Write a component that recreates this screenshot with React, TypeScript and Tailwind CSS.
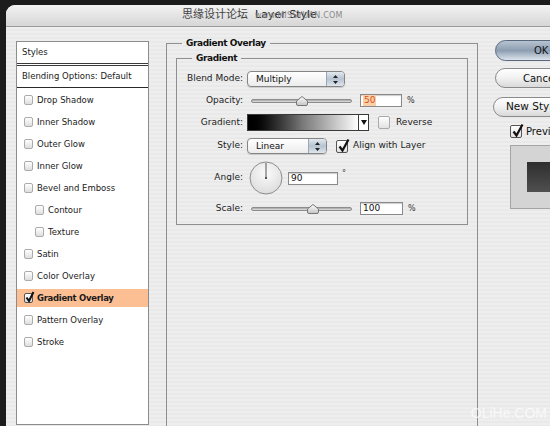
import React from "react";

const items = [
  { label: "Drop Shadow" },
  { label: "Inner Shadow" },
  { label: "Outer Glow" },
  { label: "Inner Glow" },
  { label: "Bevel and Emboss" },
  { label: "Contour", sub: true },
  { label: "Texture", sub: true },
  { label: "Satin" },
  { label: "Color Overlay" },
  { label: "Gradient Overlay", active: true },
  { label: "Pattern Overlay" },
  { label: "Stroke" },
];

function ListCheck({ checked }: { checked?: boolean }) {
  return (
    <span
      className={`relative flex h-[10px] w-[9px] shrink-0 rounded-[2px] border bg-gradient-to-b from-white to-[#dedede] ${
        checked ? "border-[#555]" : "border-[#ababab]"
      }`}
    >
      {checked && (
        <svg className="absolute -top-[3px] left-0" width="10" height="12" viewBox="0 0 10 12">
          <path d="M1.5 6.5 L4 10 L8.5 1" fill="none" stroke="#111" strokeWidth="2" />
        </svg>
      )}
    </span>
  );
}

function BigCheck({ checked }: { checked?: boolean }) {
  return (
    <span
      className={`relative flex h-[13px] w-[12px] shrink-0 rounded-[2px] border bg-gradient-to-b from-white to-[#e2e2e2] ${
        checked ? "border-[#555]" : "border-[#aaa]"
      }`}
    >
      {checked && (
        <svg className="absolute -top-[3px] left-[1px]" width="13" height="15" viewBox="0 0 13 15">
          <path d="M1.5 8.5 L4.5 12.5 L10.5 1.5" fill="none" stroke="#111" strokeWidth="2.2" />
        </svg>
      )}
    </span>
  );
}

function Select({ value, width }: { value: string; width: string }) {
  return (
    <div
      className={`flex h-[16px] ${width} shrink-0 overflow-hidden rounded-[4px] border border-[#858585] bg-gradient-to-b from-white to-[#ececec] shadow-[0_1px_1px_rgba(0,0,0,0.15)]`}
    >
      <span className="flex-1 pl-[8px] text-[9px] leading-[14px] text-[#111]">{value}</span>
      <span className="flex w-[18px] items-center justify-center border-l border-[#9aa6b3] bg-gradient-to-b from-[#e3e9ef] via-[#b6c3d1] to-[#dfe6ed]">
        <svg width="5" height="9" viewBox="0 0 5 9">
          <path d="M2.5 0 L5 3 L0 3Z M2.5 9 L5 6 L0 6Z" fill="#222" />
        </svg>
      </span>
    </div>
  );
}

function Slider({ pos }: { pos: number }) {
  return (
    <div className="relative h-[13px] w-[101px] shrink-0">
      <div className="absolute left-0 right-0 top-[5px] h-[4px] rounded-full border border-[#8d8d8d] bg-gradient-to-b from-[#a5a5a5] to-[#e2e2e2]" />
      <svg className="absolute top-[2px]" style={{ left: pos - 6 }} width="12" height="10" viewBox="0 0 12 10">
        <defs>
          <linearGradient id="th" x1="0" y1="0" x2="0" y2="1">
            <stop offset="0" stopColor="#ffffff" />
            <stop offset="1" stopColor="#c4c4c4" />
          </linearGradient>
        </defs>
        <path d="M6 0.5 L11.5 5 L11.5 8 Q11.5 9.5 10 9.5 L2 9.5 Q0.5 9.5 0.5 8 L0.5 5 Z" fill="url(#th)" stroke="#777" />
      </svg>
    </div>
  );
}

function Field({ children, width }: { children: React.ReactNode; width: string }) {
  return (
    <div
      className={`flex h-[13px] ${width} shrink-0 items-center border border-[#8a8a8a] bg-white pl-[2px] text-[9px] leading-[11px] text-[#111] shadow-[inset_0_1px_1px_rgba(0,0,0,0.2)]`}
    >
      {children}
    </div>
  );
}

function Row({ label, className, children }: { label: string; className?: string; children: React.ReactNode }) {
  return (
    <div className={`flex items-center ${className ?? ""}`}>
      <span className="w-[57px] shrink-0 text-right text-[9px] text-[#222]">{label}</span>
      <div className="ml-[4px] flex items-center">{children}</div>
    </div>
  );
}

export default function App() {
  return (
    <div className="relative h-[426px] w-[550px] overflow-hidden bg-[#1c1c1c] pl-[6px] pt-[5px] font-['DejaVu_Sans','Noto_Sans_CJK_SC',sans-serif]">
      <div className="flex h-[430px] w-[560px] flex-col overflow-hidden rounded-tl-[9px] bg-[#ececec]">
        {/* title bar */}
        <div className="flex h-[22px] shrink-0 items-center border-b border-[#9c9c9c] bg-gradient-to-b from-[#f3f3f3] to-[#d6d6d6] pl-[176px]">
          <span className="text-[11px] text-[#444]">思缘设计论坛</span>
          <span className="relative ml-[7px] text-[11px] text-[#1a1a1a]">
            Layer Style
            <span className="absolute left-0 top-[3px] whitespace-nowrap text-[8px] tracking-[0.2px] text-[#8a8a8a]">
              www.MISSYUAN.COM
            </span>
          </span>
        </div>

        {/* body */}
        <div className="flex flex-1 items-start bg-[repeating-linear-gradient(180deg,#eeeeee_0px,#eeeeee_2px,#e9e9e9_2px,#e9e9e9_4px)] pl-[10px] pt-[10px]">
          {/* style list */}
          <div className="mt-[4px] h-[384px] w-[133px] shrink-0 border border-[#8c8c8c] bg-white text-[8.5px] text-[#1a1a1a]">
            <div className="flex h-[21px] items-center pl-[5px]">Styles</div>
            <div className="h-[3px] border-y border-[#3a3a3a]" />
            <div className="flex h-[22px] items-center border-b border-[#2a2a2a] pl-[5px]">Blending Options: Default</div>
            {items.map((it) => (
              <div key={it.label} className="h-[22px] pb-[1px] pt-[3px]">
                <div
                  className={`flex h-[18px] items-center gap-[4px] ${it.sub ? "pl-[18px]" : "pl-[7px]"} ${
                    it.active ? "bg-[#fcbf94] font-bold" : ""
                  }`}
                >
                  <ListCheck checked={it.active} />
                  <span className={it.active ? "tracking-[-0.3px]" : ""}>{it.label}</span>
                </div>
              </div>
            ))}
          </div>

          {/* gradient overlay panel */}
          <fieldset className="ml-[17px] h-[420px] w-[312px] shrink-0 border border-[#8f8f8f] px-[9px] pt-[3px]">
            <legend className="ml-[6px] px-[4px] text-[9px] font-bold leading-[12px] tracking-[-0.4px] text-[#111]">
              Gradient Overlay
            </legend>
            <fieldset className="w-[292px] border border-[#8f8f8f] px-[9px] pb-[9px] pt-[7px]">
              <legend className="ml-[6px] px-[4px] text-[9px] font-bold leading-[12px] tracking-[-0.4px] text-[#111]">
                Gradient
              </legend>

              <Row label="Blend Mode:" className="h-[16px]">
                <Select value="Multiply" width="w-[98px]" />
              </Row>

              <Row label="Opacity:" className="mt-[7px] h-[13px]">
                <span className="ml-[4px]">
                  <Slider pos={51} />
                </span>
                <span className="ml-[8px]">
                  <Field width="w-[42px]">
                    <span className="bg-[#fbd0a8] px-[1px] text-[#d4521a]">50</span>
                  </Field>
                </span>
                <span className="ml-[5px] text-[8px] text-[#333]">%</span>
              </Row>

              <Row label="Gradient:" className="mt-[7px] h-[17px]">
                <div className="h-[17px] w-[112px] border border-[#3a3a3a] bg-gradient-to-r from-black via-[#7a7a7a] to-white" />
                <div className="flex h-[17px] w-[10px] items-center justify-center border border-l-0 border-[#3a3a3a] bg-white">
                  <svg width="6" height="5" viewBox="0 0 6 5">
                    <path d="M0 0 L6 0 L3 5Z" fill="#111" />
                  </svg>
                </div>
                <span className="ml-[9px]">
                  <BigCheck />
                </span>
                <span className="ml-[6px] text-[9px] text-[#222]">Reverse</span>
              </Row>

              <Row label="Style:" className="mt-[7px] h-[16px]">
                <Select value="Linear" width="w-[80px]" />
                <span className="ml-[9px]">
                  <BigCheck checked />
                </span>
                <span className="ml-[5px] text-[9px] text-[#222]">Align with Layer</span>
              </Row>

              <Row label="Angle:" className="mt-[7px] h-[34px]">
                <svg className="ml-[2px]" width="34" height="34" viewBox="0 0 34 34">
                  <defs>
                    <radialGradient id="dial" cx="0.5" cy="0.35" r="0.65">
                      <stop offset="0" stopColor="#fbfbfb" />
                      <stop offset="1" stopColor="#dcdcdc" />
                    </radialGradient>
                  </defs>
                  <circle cx="17" cy="17" r="16" fill="url(#dial)" stroke="#8d8d8d" />
                  <line x1="17" y1="17" x2="17" y2="2" stroke="#555" strokeWidth="1" />
                  <rect x="16" y="16" width="2" height="2" fill="#555" />
                </svg>
                <span className="ml-[5px]">
                  <Field width="w-[50px]">90</Field>
                </span>
                <span className="ml-[4px] -mt-[8px] text-[8px] text-[#333]">°</span>
              </Row>

              <Row label="Scale:" className="mt-[7px] h-[13px]">
                <span className="ml-[4px]">
                  <Slider pos={62} />
                </span>
                <span className="ml-[8px]">
                  <Field width="w-[43px]">100</Field>
                </span>
                <span className="ml-[5px] text-[8px] text-[#333]">%</span>
              </Row>
            </fieldset>
          </fieldset>

          {/* buttons */}
          <div className="ml-[15px] mt-[3px] flex w-[90px] shrink-0 flex-col text-[10px] text-[#111]">
            <div className="ml-[2px] flex h-[21px] w-[90px] items-center rounded-l-full border border-[#58687c] bg-gradient-to-b from-[#b7c3d0] via-[#8d9eb2] to-[#dde4ec] pl-[38px]">
              OK
            </div>
            <div className="ml-[2px] mt-[7px] flex h-[20px] w-[90px] items-center rounded-l-full border border-[#8a8a8a] bg-gradient-to-b from-white via-[#f1f1f1] to-[#d9d9d9] pl-[27px]">
              Cancel
            </div>
            <div className="mt-[9px] flex h-[20px] w-[90px] items-center whitespace-nowrap rounded-l-full border border-[#8a8a8a] bg-gradient-to-b from-white via-[#f1f1f1] to-[#d9d9d9] pl-[12px] text-[10.5px]">
              New Style...
            </div>
            <div className="ml-[17px] mt-[7px] flex h-[14px] items-center">
              <BigCheck checked />
              <span className="ml-[4px]">Preview</span>
            </div>
            <div className="ml-[17px] mt-[7px] flex h-[64px] w-[80px] items-center border border-[#a4a4a4] bg-[#d4d4d4] pl-[16px]">
              <div className="h-[30px] w-[60px] bg-gradient-to-b from-[#2f2f2f] to-[#4f4f4f]" />
            </div>
          </div>
        </div>
      </div>

      <span className="absolute bottom-[2px] right-[3px] font-['Liberation_Sans',sans-serif] text-[14px] text-white/70">
        OLiHe.COM
      </span>
    </div>
  );
}
